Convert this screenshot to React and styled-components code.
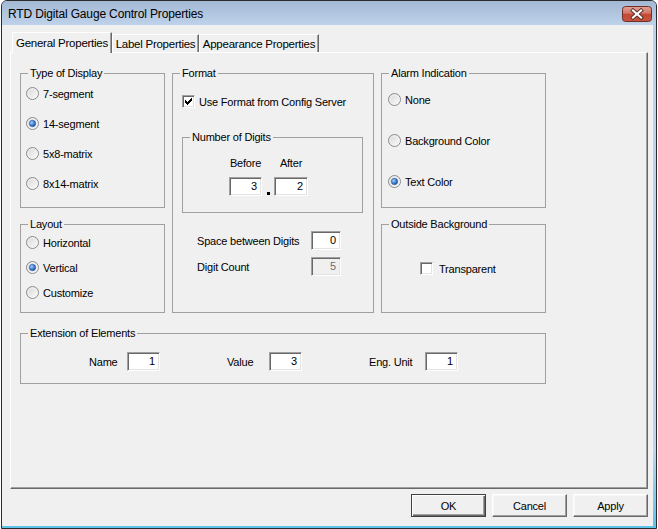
import { useId } from 'react';
import styled, { createGlobalStyle, css } from 'styled-components';

const GlobalStyle = createGlobalStyle`
  html, body {
    margin: 0;
    padding: 0;
    background: #fff;
  }
  body {
    font-family: "Liberation Sans", Arial, sans-serif;
    color: #000;
  }
`;

const Window = styled.div`
  margin-left: 1px;
  width: 656px;
  height: 529px;
  box-sizing: border-box;
  border: 1px solid #2b2b2b;
  border-radius: 6px 6px 0 0;
  overflow: hidden;
  display: flex;
  flex-direction: column;
  letter-spacing: -0.2px;
  background: linear-gradient(to bottom, #bcd1ea 0%, #bfd4ec 85%, #5fc2e8 100%);
`;

const TitleBar = styled.div`
  flex: none;
  height: 24px;
  display: flex;
  align-items: flex-start;
  justify-content: space-between;
  padding: 0 4px 0 6px;
  background: linear-gradient(to bottom, #a3b8d3, #bed2ea);
`;

const Title = styled.span`
  font-size: 12px;
  line-height: 26px;
  letter-spacing: -0.15px;
`;

const CloseBox = styled.div`
  margin-top: 5px;
  width: 30px;
  height: 16px;
`;

const Client = styled.div`
  flex: 1;
  margin: 0 3px 2px 0;
  background: #f0f0f0;
  padding: 7px 5px 0 8px;
  display: flex;
  flex-direction: column;
`;

const TabStrip = styled.div`
  display: flex;
  align-items: flex-end;
  height: 20px;
  padding-left: 2px;
  position: relative;
  z-index: 1;
`;

const Tab = styled.div`
  width: ${p => p.$w}px;
  height: ${p => (p.$active ? 21 : 18)}px;
  margin-bottom: ${p => (p.$active ? -1 : 0)}px;
  padding-bottom: ${p => (p.$active ? 1 : 0)}px;
  box-sizing: border-box;
  border: 1px solid;
  border-bottom: none;
  border-color: #fff #696969 transparent #fff;
  box-shadow: inset -1px 0 #a0a0a0;
  background: #f0f0f0;
  font-size: 11.5px;
  letter-spacing: -0.25px;
  display: flex;
  align-items: center;
  justify-content: center;
  white-space: nowrap;
`;

const Panel = styled.div`
  height: 437px;
  box-sizing: border-box;
  border: 1px solid;
  border-color: #fff #696969 #696969 #fff;
  box-shadow: inset -1px -1px 0 #a0a0a0;
  padding: 14px 0 0 9px;
`;

const Columns = styled.div`
  display: grid;
  grid-template-columns: 145px 202px 165px;
  grid-template-rows: 141px 95px;
  column-gap: 7px;
  row-gap: 10px;
`;

const Group = styled.fieldset`
  margin: 0;
  padding: 0;
  min-width: 0;
  box-sizing: border-box;
  border: 1px solid #a0a0a0;
  font-size: 11px;
  ${p => p.$span && css`grid-row: span 2;`}
  ${p => p.$width && css`width: ${p.$width}px;`}
  ${p => p.$height && css`height: ${p.$height}px;`}
  ${p => p.$top && css`margin-top: ${p.$top}px;`}
`;

const Legend = styled.legend`
  margin-left: 7px;
  padding: 0 2px;
  font-size: 11px;
  line-height: 13px;
`;

const GroupBody = styled.div`
  display: flex;
  flex-direction: column;
  gap: ${p => p.$gap || 0}px;
  padding: ${p => p.$pad};
`;

const Option = styled.div`
  display: flex;
  align-items: center;
  gap: ${p => p.$gap || 4}px;
  height: 13px;
  font-size: 11px;
  white-space: nowrap;
`;

const CheckBoxBox = styled.span`
  width: 13px;
  height: 13px;
  box-sizing: border-box;
  border: 1px solid;
  border-color: #a0a0a0 #fff #fff #a0a0a0;
  box-shadow: inset 1px 1px #696969, inset -1px -1px #e3e3e3;
  background: #fff;
  display: flex;
  align-items: center;
  justify-content: center;
  flex: none;
`;

const Field = styled.div`
  width: ${p => p.$w}px;
  height: 19px;
  box-sizing: border-box;
  border: 1px solid;
  border-color: #a0a0a0 #fff #fff #a0a0a0;
  box-shadow: inset 1px 1px #696969, inset -1px -1px #e3e3e3;
  background: ${p => (p.$disabled ? '#f0f0f0' : '#fff')};
  color: ${p => (p.$disabled ? '#6d6d6d' : '#000')};
  font-size: 11px;
  line-height: 17px;
  text-align: right;
  padding-right: 4px;
`;

const InnerGroupWrap = styled.div`
  margin-top: 23px;
`;

const DigitsGrid = styled.div`
  display: grid;
  grid-template-columns: 33px 12px 34px;
  grid-template-rows: 13px 19px;
  row-gap: 7px;
  margin-left: 46px;
  font-size: 11px;
  line-height: 13px;
`;

const DigitLabel = styled.span`
  justify-self: center;
`;

const Dot = styled.span`
  width: 3px;
  height: 3px;
  background: #000;
  align-self: end;
  justify-self: center;
  margin-bottom: 1px;
`;

const FieldGrid = styled.div`
  display: grid;
  grid-template-columns: 114px 30px;
  row-gap: 7px;
  align-items: center;
  margin: 18px 0 0 15px;
  font-size: 11px;
`;

const ExtRow = styled.div`
  display: flex;
  gap: 67px;
  padding: 12px 0 12px 68px;
`;

const ExtField = styled.div`
  display: flex;
  align-items: center;
  font-size: 11px;
`;

const ExtLabel = styled.span`
  width: ${p => p.$w}px;
`;

const ButtonRow = styled.div`
  display: flex;
  justify-content: flex-end;
  gap: 6px;
  margin-top: 5px;
`;

const Button = styled.button`
  width: 75px;
  height: 23px;
  box-sizing: border-box;
  padding: 0;
  font-family: "Liberation Sans", Arial, sans-serif;
  font-size: 11px;
  letter-spacing: -0.2px;
  color: #000;
  background: #f0f0f0;
  border: 1px solid;
  border-color: #fff #696969 #696969 #fff;
  box-shadow: inset -1px -1px #a0a0a0, inset 1px 1px #f8f8f8;
  ${p =>
    p.$default &&
    css`
      border-color: #404040;
      box-shadow: inset 1px 1px #fff, inset -1px -1px #696969, inset -2px -2px #a0a0a0;
    `}
`;

function Radio({ checked }) {
  const id = useId().replace(/:/g, '');
  return (
    <svg width="13" height="13" viewBox="0 0 13 13" style={{ flex: 'none' }}>
      <defs>
        <linearGradient id={`f${id}`} x1="0" y1="0" x2="1" y2="1">
          <stop offset="0" stopColor="#d6d6d6" />
          <stop offset="1" stopColor="#fdfdfd" />
        </linearGradient>
        <radialGradient id={`d${id}`} cx="0.35" cy="0.35" r="0.75">
          <stop offset="0" stopColor="#a9d0f5" />
          <stop offset="0.5" stopColor="#4a86d4" />
          <stop offset="1" stopColor="#17468f" />
        </radialGradient>
      </defs>
      <circle cx="6.5" cy="6.5" r="6" fill={`url(#f${id})`} stroke="#8a8a8a" strokeWidth="1" />
      <circle cx="6.5" cy="6.5" r="4.6" fill="none" stroke="#f4f4f4" strokeWidth="0.8" />
      {checked && <circle cx="6.5" cy="6.5" r="3.2" fill={`url(#d${id})`} stroke="#2a5aa8" strokeWidth="0.6" />}
    </svg>
  );
}

function CheckBox({ checked }) {
  return (
    <CheckBoxBox>
      {checked && (
        <svg width="7" height="7" viewBox="0 0 7 7" shapeRendering="crispEdges">
          <polygon points="0,2 2,4 6,0 7,0 7,3 2,7 0,5" fill="#000" />
        </svg>
      )}
    </CheckBoxBox>
  );
}

function CloseButton() {
  return (
    <CloseBox>
      <svg width="30" height="16" viewBox="0 0 30 16">
        <defs>
          <linearGradient id="closeGrad" x1="0" y1="0" x2="0" y2="1">
            <stop offset="0" stopColor="#e2a396" />
            <stop offset="0.45" stopColor="#d3776a" />
            <stop offset="0.5" stopColor="#c24a36" />
            <stop offset="1" stopColor="#c8543c" />
          </linearGradient>
        </defs>
        <rect x="0.5" y="0.5" width="29" height="15" rx="3" fill="url(#closeGrad)" stroke="#6d2f27" />
        <path d="M11 4.5 L19 11.5 M19 4.5 L11 11.5" stroke="#5b2a24" strokeWidth="4" strokeLinecap="square" />
        <path d="M11 4.5 L19 11.5 M19 4.5 L11 11.5" stroke="#fff" strokeWidth="2.2" strokeLinecap="square" />
      </svg>
    </CloseBox>
  );
}

export default function App() {
  return (
    <>
      <GlobalStyle />
      <Window>
        <TitleBar>
          <Title>RTD Digital Gauge Control Properties</Title>
          <CloseButton />
        </TitleBar>
        <Client>
          <TabStrip>
            <Tab $w={100} $active>General Properties</Tab>
            <Tab $w={87}>Label Properties</Tab>
            <Tab $w={120}>Appearance Properties</Tab>
          </TabStrip>
          <Panel>
            <Columns>
              <Group>
                <Legend>Type of Display</Legend>
                <GroupBody $pad="7px 0 0 5px" $gap={17}>
                  <Option><Radio />7-segment</Option>
                  <Option><Radio checked />14-segment</Option>
                  <Option><Radio />5x8-matrix</Option>
                  <Option><Radio />8x14-matrix</Option>
                </GroupBody>
              </Group>

              <Group $span>
                <Legend>Format</Legend>
                <GroupBody $pad="15px 10px 0 9px">
                  <Option><CheckBox checked />Use Format from Config Server</Option>
                  <InnerGroupWrap>
                    <Group $height={82}>
                      <Legend>Number of Digits</Legend>
                      <GroupBody $pad="13px 0 0 0">
                        <DigitsGrid>
                          <DigitLabel>Before</DigitLabel>
                          <span />
                          <DigitLabel>After</DigitLabel>
                          <Field $w={33}>3</Field>
                          <Dot />
                          <Field $w={34}>2</Field>
                        </DigitsGrid>
                      </GroupBody>
                    </Group>
                  </InnerGroupWrap>
                  <FieldGrid>
                    <span>Space between Digits</span>
                    <Field $w={30}>0</Field>
                    <span>Digit Count</span>
                    <Field $w={30} $disabled>5</Field>
                  </FieldGrid>
                </GroupBody>
              </Group>

              <Group>
                <Legend>Alarm Indication</Legend>
                <GroupBody $pad="13px 0 0 6px" $gap={28}>
                  <Option><Radio />None</Option>
                  <Option><Radio />Background Color</Option>
                  <Option><Radio checked />Text Color</Option>
                </GroupBody>
              </Group>

              <Group>
                <Legend>Layout</Legend>
                <GroupBody $pad="5px 0 0 5px" $gap={12}>
                  <Option><Radio />Horizontal</Option>
                  <Option><Radio checked />Vertical</Option>
                  <Option><Radio />Customize</Option>
                </GroupBody>
              </Group>

              <Group>
                <Legend>Outside Background</Legend>
                <GroupBody $pad="31px 0 0 38px">
                  <Option $gap={6}><CheckBox />Transparent</Option>
                </GroupBody>
              </Group>
            </Columns>

            <Group $width={526} $top={14}>
              <Legend>Extension of Elements</Legend>
              <ExtRow>
                <ExtField>
                  <ExtLabel $w={38}>Name</ExtLabel>
                  <Field $w={33}>1</Field>
                </ExtField>
                <ExtField>
                  <ExtLabel $w={42}>Value</ExtLabel>
                  <Field $w={33}>3</Field>
                </ExtField>
                <ExtField>
                  <ExtLabel $w={56}>Eng. Unit</ExtLabel>
                  <Field $w={33}>1</Field>
                </ExtField>
              </ExtRow>
            </Group>
          </Panel>
          <ButtonRow>
            <Button $default>OK</Button>
            <Button>Cancel</Button>
            <Button>Apply</Button>
          </ButtonRow>
        </Client>
      </Window>
    </>
  );
}
